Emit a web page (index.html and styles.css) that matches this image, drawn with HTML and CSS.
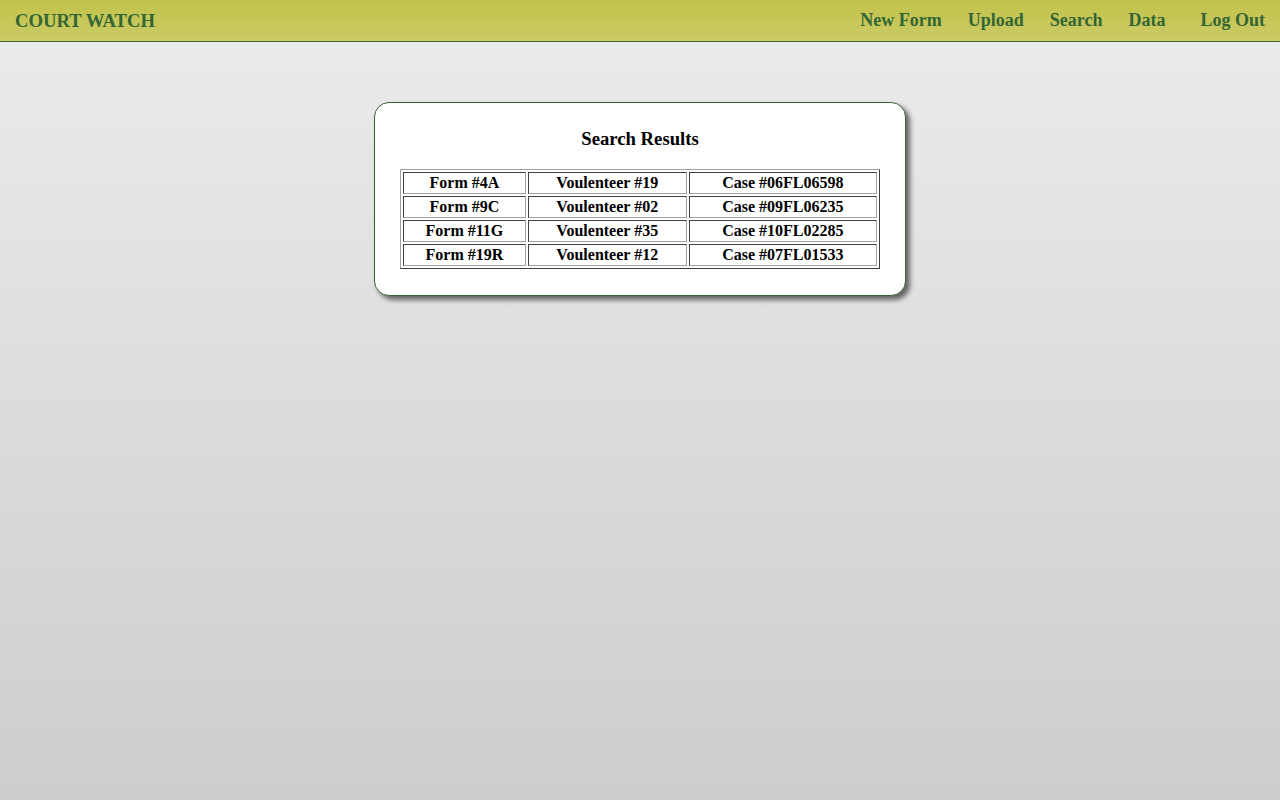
FILE: index.html
```html
<!DOCTYPE html>
<html>
<head>
<meta charset="utf-8">
<title>Court Watch</title>
<link rel="stylesheet" href="styles.css">
</head>
<body>
<header class="topbar">
  <a class="brand" href="#">COURT WATCH</a>
  <nav class="nav">
    <a href="#">New Form</a>
    <a href="#">Upload</a>
    <a href="#">Search</a>
    <a href="#">Data</a>
    <a class="logout" href="#">Log Out</a>
  </nav>
</header>
<main class="main">
  <section class="card">
    <h3 class="card-title">Search Results</h3>
    <table class="results">
      <tr><td>Form #4A</td><td>Voulenteer #19</td><td>Case #06FL06598</td></tr>
      <tr><td>Form #9C</td><td>Voulenteer #02</td><td>Case #09FL06235</td></tr>
      <tr><td>Form #11G</td><td>Voulenteer #35</td><td>Case #10FL02285</td></tr>
      <tr><td>Form #19R</td><td>Voulenteer #12</td><td>Case #07FL01533</td></tr>
    </table>
  </section>
</main>
</body>
</html>
```

FILE: styles.css
```css
html, body {
  margin: 0;
  padding: 0;
  height: 100%;
}
body {
  font-family: "Liberation Serif", "Times New Roman", serif;
  background: linear-gradient(to bottom, #ececec 0%, #cdcdcd 100%);
  min-height: 800px;
  color: #000;
}
.topbar {
  height: 41px;
  border-bottom: 1px solid #3e6b2a;
  background: linear-gradient(to bottom, #c2c24a 0%, #cbcb68 100%);
  display: flex;
  align-items: center;
  justify-content: space-between;
  padding: 0 15px;
  box-sizing: content-box;
}
.topbar a {
  color: #336633;
  text-decoration: none;
  font-weight: bold;
  font-size: 18px;
}
.topbar .brand {
  font-size: 18.7px;
}
.nav {
  display: flex;
  gap: 26px;
}
.nav .logout {
  margin-left: 9px;
}
.main {
  display: flex;
  justify-content: center;
  padding-top: 60px;
}
.card {
  width: 480px;
  padding: 0 25px 26px 25px;
  background: #fff;
  border: 1px solid #336633;
  border-radius: 15px;
  box-shadow: 4px 4px 5px #666;
}
.card-title {
  text-align: center;
  font-size: 18.72px;
  margin: 25px 0 19px 0;
  line-height: 22px;
}
.results {
  width: 100%;
  border: 1px solid #808080;
  border-color: #a0a0a0 #404040 #404040 #a0a0a0;
  border-spacing: 2px;
}
.results td {
  border: 1px solid #404040;
  border-color: #404040 #a0a0a0 #a0a0a0 #404040;
  text-align: center;
  font-weight: bold;
  font-size: 16px;
  padding: 0 1px;
  height: 20px;
  line-height: 18px;
  box-sizing: content-box;
}
```
